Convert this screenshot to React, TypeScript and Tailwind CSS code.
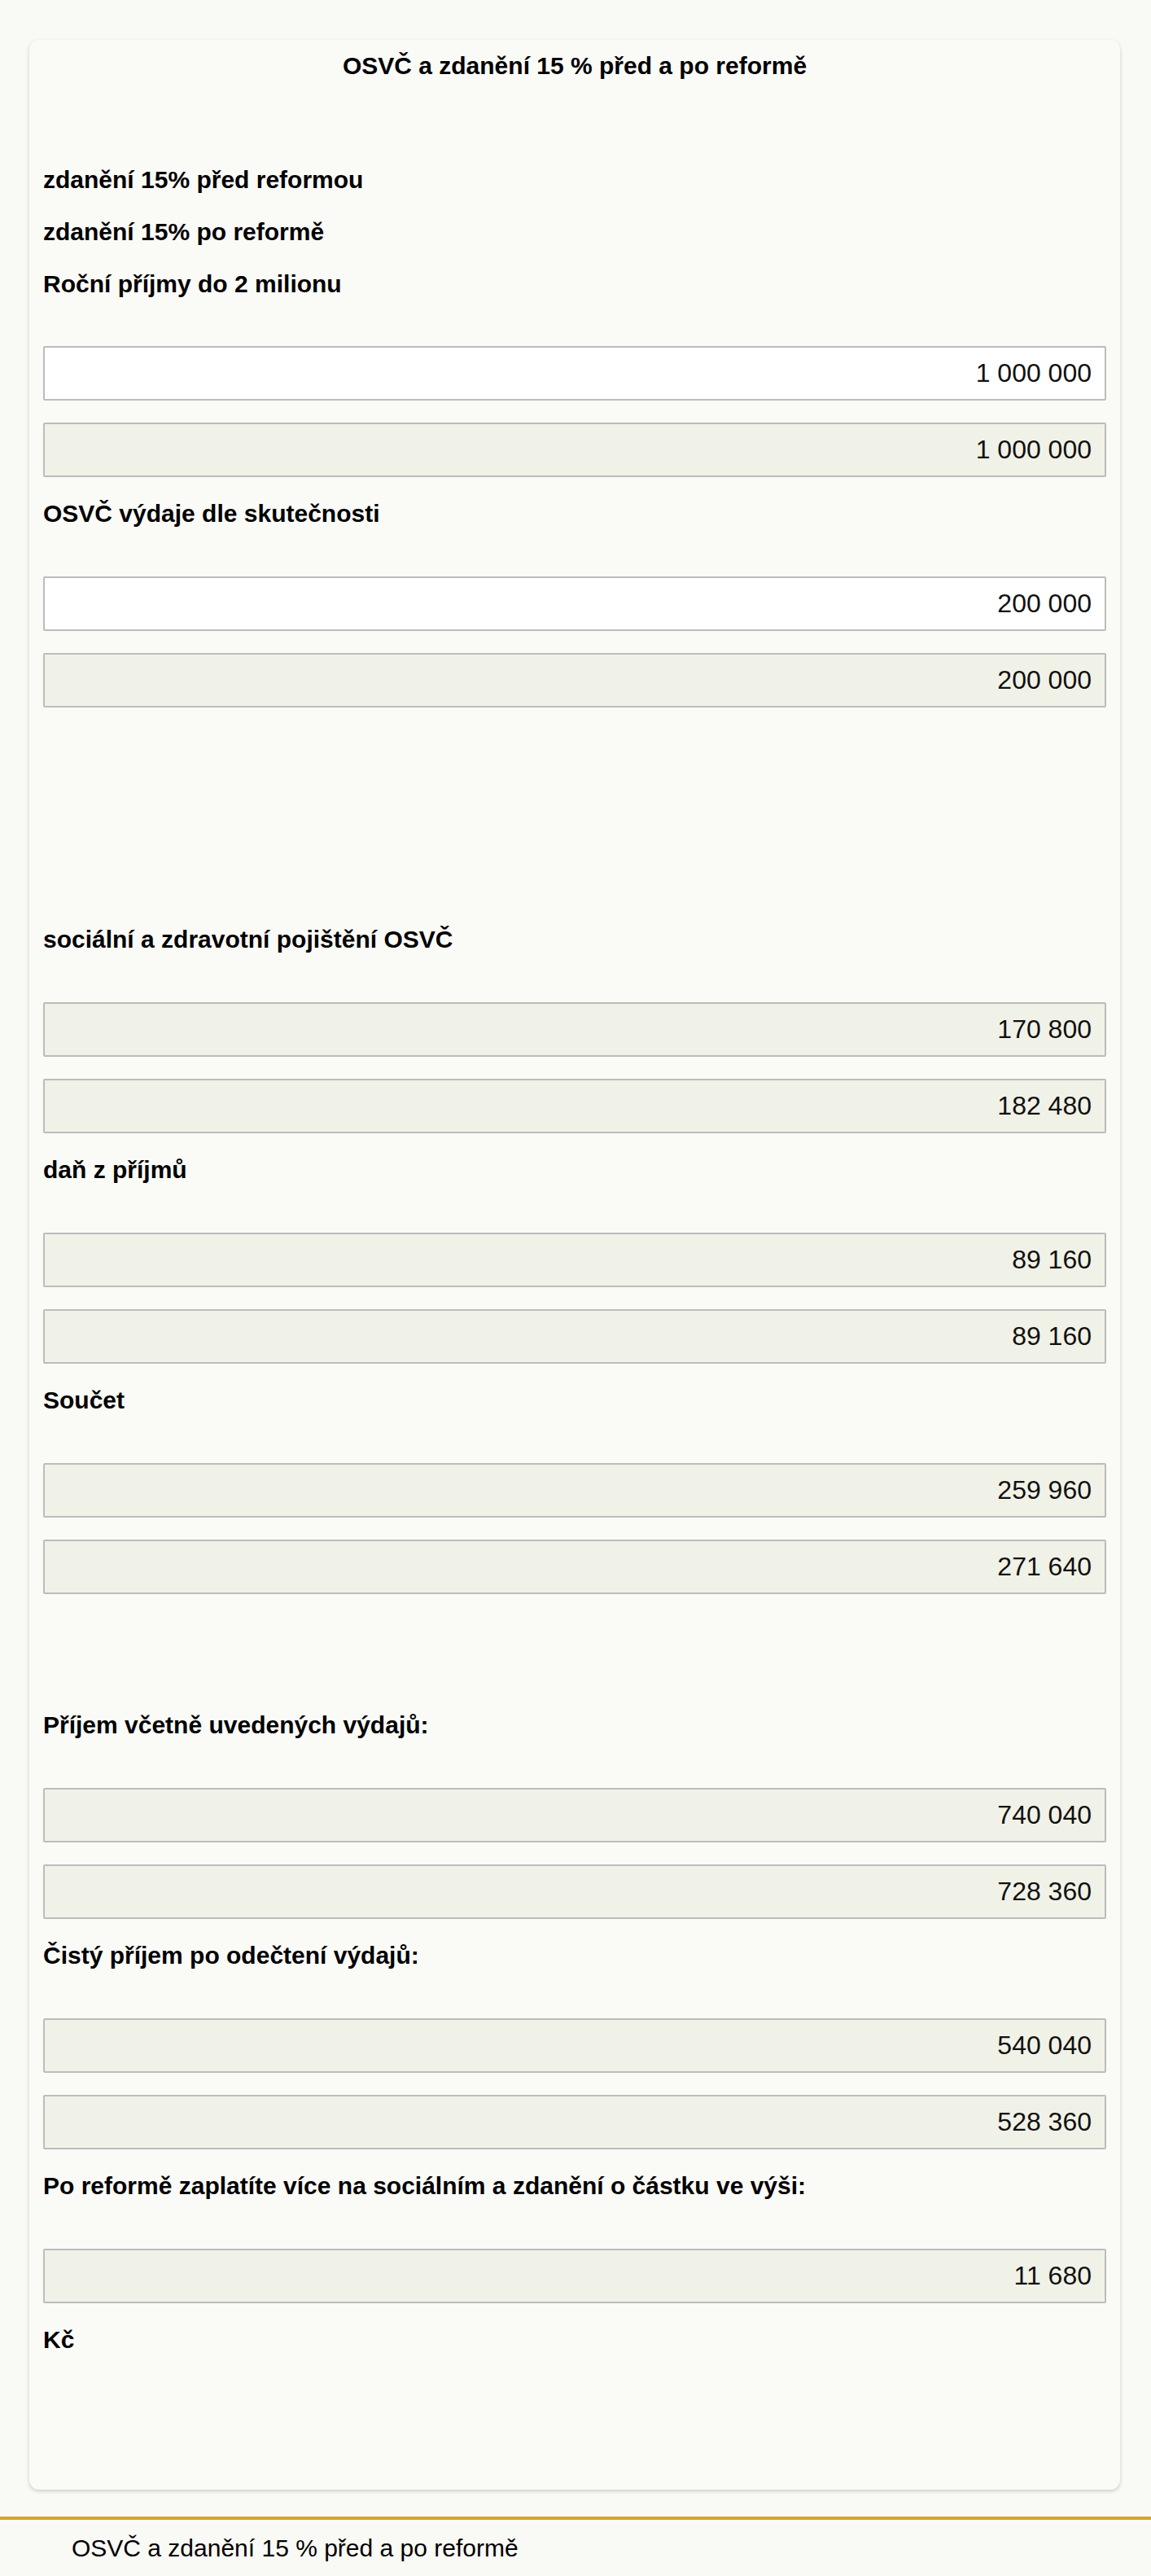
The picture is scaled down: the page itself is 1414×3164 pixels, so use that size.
type Field = {
    label: string;
    values: { value: string; editable?: boolean }[];
    gapBefore?: string;
};

const fields: Field[] = [
    {
        label: "OSVČ výdaje dle skutečnosti",
        values: [{ value: "200 000", editable: true }, { value: "200 000" }],
        gapBefore: "mt-[28px]",
    },
    {
        label: "sociální a zdravotní pojištění OSVČ",
        values: [{ value: "170 800" }, { value: "182 480" }],
        gapBefore: "mt-[268px]",
    },
    {
        label: "daň z příjmů",
        values: [{ value: "89 160" }, { value: "89 160" }],
        gapBefore: "mt-[28px]",
    },
    {
        label: "Součet",
        values: [{ value: "259 960" }, { value: "271 640" }],
        gapBefore: "mt-[28px]",
    },
    {
        label: "Příjem včetně uvedených výdajů:",
        values: [{ value: "740 040" }, { value: "728 360" }],
        gapBefore: "mt-[144px]",
    },
    {
        label: "Čistý příjem po odečtení výdajů:",
        values: [{ value: "540 040" }, { value: "528 360" }],
        gapBefore: "mt-[28px]",
    },
    {
        label: "Po reformě zaplatíte více na sociálním a zdanění o částku ve výši:",
        values: [{ value: "11 680" }],
        gapBefore: "mt-[28px]",
    },
];

const labelClassName = "h-[34px] text-[30px] font-bold leading-[34px] text-black";

const inputClassName =
    "block h-[67px] w-full rounded-[2px] border-2 border-[#bcbcbc] pr-[16px] text-right text-[32px] text-[#111] outline-none";

function NumberInput({ value, editable }: { value: string; editable?: boolean }) {
    return (
        <input
            type="text"
            readOnly
            value={value}
            className={`${inputClassName} ${editable ? "bg-white" : "bg-[#f1f2e7]"}`}
        />
    );
}

function FieldBlock({ field }: { field: Field }) {
    return (
        <div className={field.gapBefore}>
            <div className={labelClassName}>{field.label}</div>

            <div className="mt-[60px] flex flex-col gap-[27px]">
                {field.values.map((item, index) => (
                    <NumberInput key={index} value={item.value} editable={item.editable} />
                ))}
            </div>
        </div>
    );
}

export default function App() {
    return (
        <div
            className="min-h-[3164px] bg-[#f9f9f5] pt-[49px]"
            style={{ fontFamily: '"Liberation Sans", Arial, sans-serif' }}
        >
            <div className="mx-[36px] w-[1340px] rounded-[12px] bg-[#fafaf7] px-[17px] pt-[15px] pb-[167px] shadow-[0_2px_5px_rgba(0,0,0,0.18)]">
                <h1 className="h-[34px] text-center text-[30px] font-bold leading-[34px] text-black">
                    OSVČ a zdanění 15 % před a po reformě
                </h1>

                <div className="mt-[106px] flex flex-col gap-[30px]">
                    <div className={labelClassName}>zdanění 15% před reformou</div>
                    <div className={labelClassName}>zdanění 15% po reformě</div>
                    <div className={labelClassName}>Roční příjmy do 2 milionu</div>
                </div>

                <div className="mt-[59px] flex flex-col gap-[27px]">
                    <NumberInput value="1 000 000" editable />
                    <NumberInput value="1 000 000" />
                </div>

                {fields.map((field) => (
                    <FieldBlock key={field.label} field={field} />
                ))}

                <div className={`mt-[28px] ${labelClassName}`}>Kč</div>
            </div>

            <footer className="mt-[33px] border-t-4 border-[#d5a428] px-[88px] pt-[18px] pb-[17px]">
                <p className="text-[30px] leading-[34px] text-black">
                    OSVČ a zdanění 15 % před a po reformě
                </p>
            </footer>
        </div>
    );
}
